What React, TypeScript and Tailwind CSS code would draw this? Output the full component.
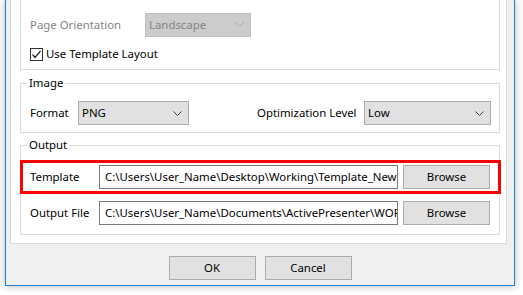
import React from 'react';

// small down-arrow used by the combo boxes
function Chevron({ color = '#333' }: { color?: string }) {
    return (
        <svg width="9" height="5" viewBox="0 0 9 5" className="shrink-0">
            <polyline points="0.5,0.5 4.5,4.5 8.5,0.5" fill="none" stroke={color} strokeWidth="1" />
        </svg>
    );
}

function Combo({ value, width, disabled }: { value: string; width: string; disabled?: boolean }) {
    return (
        <div
            className={`flex items-center justify-between h-[24px] pl-[3px] pr-[6px] border ${width} ${
                disabled
                    ? 'bg-[#cccccc] border-[#bfbfbf] text-[#838383]'
                    : 'bg-[#e1e1e1] border-[#adadad] text-black'
            }`}
        >
            <span>{value}</span>
            <Chevron color={disabled ? '#a8a8a8' : '#404040'} />
        </div>
    );
}

function Button({ label }: { label: string }) {
    return (
        <button
            type="button"
            className="w-[87px] h-[24px] bg-[#e1e1e1] border border-[#adadad] text-black"
        >
            {label}
        </button>
    );
}

function PathRow({ label, path }: { label: string; path: string }) {
    return (
        <div className="flex items-center">
            <span className="w-[69px] shrink-0">{label}</span>
            <div className="w-[299px] h-[24px] shrink-0 border border-[#7a7a7a] bg-white pl-[5px] overflow-hidden whitespace-nowrap flex items-center">
                <span className="overflow-hidden">{path}</span>
            </div>
            <div className="ml-[5px]">
                <Button label="Browse" />
            </div>
        </div>
    );
}

export default function App() {
    return (
        <div
            className="w-[523px] h-[295px] bg-white overflow-hidden pl-[5px] text-[11.4px] leading-[16px] text-black"
            style={{ fontFamily: '"Noto Sans", "Open Sans", sans-serif' }}
        >
            <div className="w-[510px] h-[286px] bg-[#f0f0f0] border-x border-b border-[#1b80d8] shadow-[0_0_8px_rgba(0,0,0,0.3)] flex flex-col">
                {/* tab page */}
                <div className="ml-[4px] mr-[7px] h-[244px] bg-white border-x border-b border-[#d9d9d9] pl-[9px] pr-[6px] pb-[8px] flex flex-col justify-end">
                    {/* first group, cut off at the top */}
                    <div className="h-[70px] border-x border-b border-[#dcdcdc] pl-[9px] pt-[13px]">
                        <div className="flex items-center h-[23px]">
                            <span className="w-[115px] text-[#838383]">Page Orientation</span>
                            <Combo value="Landscape" width="w-[106px]" disabled />
                        </div>
                        <label className="flex items-center mt-[10px]">
                            <span className="w-[13px] h-[13px] border border-[#333333] bg-white flex items-center justify-center">
                                <svg width="11" height="11" viewBox="0 0 11 11">
                                    <polyline points="1.5,5.5 4,8.5 9.5,2" fill="none" stroke="#222" strokeWidth="1.2" />
                                </svg>
                            </span>
                            <span className="ml-[3px]">Use Template Layout</span>
                        </label>
                    </div>

                    <fieldset className="mt-[5px] border border-[#dcdcdc]">
                        <legend className="ml-[6px] px-[2px]">Image</legend>
                        <div className="flex items-center justify-between pl-[9px] pr-[8px] pt-[10px] pb-[7px]">
                            <div className="flex items-center">
                                <span className="w-[48px]">Format</span>
                                <Combo value="PNG" width="w-[111px]" />
                            </div>
                            <div className="flex items-center">
                                <span className="w-[107px]">Optimization Level</span>
                                <Combo value="Low" width="w-[127px]" />
                            </div>
                        </div>
                    </fieldset>

                    <fieldset className="mt-[4px] border border-[#dcdcdc]">
                        <legend className="ml-[6px] px-[2px]">Output</legend>
                        <div className="pt-[7px] pb-[9px]">
                            <div className="-ml-[1px] -mr-[2px] border-[3px] border-[#fe0000] pl-[7px] py-[2px]">
                                <PathRow label="Template" path="C:\Users\User_Name\Desktop\Working\Template_New" />
                            </div>
                            <div className="mt-[7px] pl-[9px]">
                                <PathRow
                                    label="Output File"
                                    path="C:\Users\User_Name\Documents\ActivePresenter\WORK"
                                />
                            </div>
                        </div>
                    </fieldset>
                </div>

                <div className="flex justify-center gap-[9px] mt-[12px]">
                    <Button label="OK" />
                    <Button label="Cancel" />
                </div>
            </div>
        </div>
    );
}
